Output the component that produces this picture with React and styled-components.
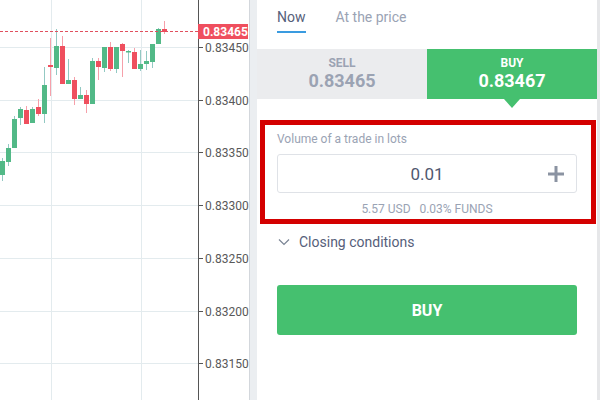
import React from 'react'
import styled, {createGlobalStyle} from 'styled-components'

const GREEN = '#52b987'
const GREEN_WICK = '#93c9c3'
const RED = '#ef4f5e'
const RED_WICK = '#f6a0aa'

// x, bodyTop, bodyBottom, wickTop, wickBottom, up?
const candles = [
    [0, 161, 175, 158, 181, 1],
    [6, 148, 162, 144, 166, 1],
    [12, 119, 148, 116, 148, 1],
    [18, 109, 118, 107, 125, 1],
    [24, 110, 124, 106, 124, 0],
    [30, 109, 123, 107, 123, 1],
    [36, 107, 114, 99, 116, 0],
    [42, 85, 114, 67, 123, 1],
    [48, 65, 67, 38, 96, 0],
    [54, 46, 68, 29, 75, 1],
    [60, 46, 84, 36, 84, 0],
    [66, 80, 84, 59, 84, 1],
    [72, 80, 99, 77, 105, 0],
    [78, 95, 99, 87, 99, 1],
    [84, 95, 104, 90, 113, 0],
    [90, 61, 104, 58, 104, 1],
    [96, 61, 67, 58, 80, 0],
    [102, 47, 68, 47, 72, 1],
    [108, 47, 69, 42, 71, 0],
    [114, 47, 69, 47, 73, 1],
    [120, 44, 51, 43, 77, 0],
    [126, 51, 52, 50, 63, 1],
    [132, 52, 69, 48, 69, 0],
    [138, 64, 69, 50, 71, 1],
    [144, 61, 64, 51, 70, 1],
    [150, 44, 62, 44, 68, 1],
    [156, 29, 44, 28, 44, 1],
    [162, 29, 32, 21, 34, 0],
]

const levels = [
    [47, '0.83450'],
    [100, '0.83400'],
    [152, '0.83350'],
    [205, '0.83300'],
    [258, '0.83250'],
    [311, '0.83200'],
    [363, '0.83150'],
]

function Chart() {
    return (
        <ChartBox>
            <svg width="249" height="400" viewBox="0 0 249 400">
                {levels.map(([y]) => (
                    <line key={y} x1="0" x2="198" y1={y + 0.5} y2={y + 0.5} stroke="#e3ebee" />
                ))}
                <line x1="51.5" x2="51.5" y1="0" y2="400" stroke="#e3ebee" />
                <line x1="141.5" x2="141.5" y1="0" y2="400" stroke="#e3ebee" />
                {candles.map(([x, bt, bb, wt, wb, up], i) => (
                    <g key={i}>
                        <line x1={x + 2.5} x2={x + 2.5} y1={wt} y2={wb} stroke={up ? GREEN_WICK : RED_WICK} />
                        <rect x={x} y={bt} width="5" height={Math.max(bb - bt, 1.5)} fill={up ? GREEN : RED} />
                    </g>
                ))}
                <line x1="0" x2="198" y1="31.5" y2="31.5" stroke="#e0505e" strokeDasharray="3 2" />
                <line x1="198.5" x2="198.5" y1="0" y2="400" stroke="#555" />
                {levels.map(([y, label]) => (
                    <g key={label}>
                        <line x1="198" x2="203" y1={y + 0.5} y2={y + 0.5} stroke="#555" />
                        <AxisText x="205" y={y + 4.5}>{label}</AxisText>
                    </g>
                ))}
                <rect x="198" y="24" width="50" height="15" fill={RED} />
                <PriceText x="203" y="36">0.83465</PriceText>
            </svg>
        </ChartBox>
    )
}

export default function App() {
    return (
        <>
            <Global />
            <Screen>
                <Chart />
                <Divider />
                <Panel>
                    <Tabs>
                        <Tab active>Now</Tab>
                        <Tab>At the price</Tab>
                    </Tabs>
                    <Quotes>
                        <Quote>
                            <QuoteLabel>SELL</QuoteLabel>
                            <QuotePrice>0.83465</QuotePrice>
                        </Quote>
                        <Quote active>
                            <QuoteLabel>BUY</QuoteLabel>
                            <QuotePrice>0.83467</QuotePrice>
                        </Quote>
                    </Quotes>
                    <Highlight>
                        <FieldLabel>Volume of a trade in lots</FieldLabel>
                        <Input>
                            <span>0.01</span>
                            <Plus>
                                <svg width="16" height="16" viewBox="0 0 16 16">
                                    <path d="M8 0v16M0 8h16" stroke="#8b93a2" strokeWidth="3" />
                                </svg>
                            </Plus>
                        </Input>
                        <Funds>5.57 USD&nbsp;&nbsp;&nbsp;0.03% FUNDS</Funds>
                    </Highlight>
                    <Conditions>
                        <svg width="12" height="8" viewBox="0 0 12 8">
                            <path d="M1 1.5l5 5 5-5" stroke="#7a8494" strokeWidth="1.2" fill="none" />
                        </svg>
                        Closing conditions
                    </Conditions>
                    <BuyButton>BUY</BuyButton>
                </Panel>
                <Scroll />
            </Screen>
        </>
    )
}

const Global = createGlobalStyle`
    body {
        margin: 0;
        font-family: Roboto, "Liberation Sans", sans-serif;
        background: #fff;
    }
`
const Screen = styled.div`
    display: flex;
    width: 600px;
    height: 400px;
    overflow: hidden;
`
const ChartBox = styled.div`
    width: 249px;
    flex: none;
    & svg { display: block; }
`
const AxisText = styled.text`
    font-family: Roboto, sans-serif;
    font-size: 12px;
    fill: #595959;
`
const PriceText = styled.text`
    font-family: Roboto, sans-serif;
    font-size: 12px;
    font-weight: bold;
    fill: #fff;
`
const Divider = styled.div`
    width: 7px;
    flex: none;
    background: #ebeef1;
    border-left: 1px solid #d3d7dc;
`
const Panel = styled.div`
    width: 340px;
    flex: none;
    display: flex;
    flex-direction: column;
`
const Tabs = styled.div`
    display: flex;
    gap: 30px;
    padding: 9px 0 0 20px;
    height: 40px;
    box-sizing: border-box;
`
const Tab = styled.div`
    font-size: 14px;
    line-height: 17px;
    height: 22px;
    color: ${p => p.active ? '#56607a' : '#9aa3b4'};
    border-bottom: 2px solid ${p => p.active ? '#3a9be0' : 'transparent'};
`
const Quotes = styled.div`
    display: flex;
    height: 50px;
    margin-top: 9px;
`
const Quote = styled.div`
    position: relative;
    flex: 1;
    display: flex;
    flex-direction: column;
    align-items: center;
    padding-top: 7px;
    box-sizing: border-box;
    background: ${p => p.active ? '#45c06f' : '#ebecee'};
    color: ${p => p.active ? '#fff' : '#9ba3b3'};
    ${p => p.active && `
        &::after {
            content: '';
            position: absolute;
            left: 50%;
            bottom: -9px;
            margin-left: -8px;
            border-left: 8px solid transparent;
            border-right: 8px solid transparent;
            border-top: 9px solid #45c06f;
        }
    `}
`
const QuoteLabel = styled.div`
    font-size: 12px;
    font-weight: bold;
    line-height: 14px;
`
const QuotePrice = styled.div`
    font-size: 18px;
    font-weight: bold;
    line-height: 22px;
`
const Highlight = styled.div`
    margin: 21px 1px 0 3px;
    height: 104px;
    box-sizing: border-box;
    border: 5px solid #d40000;
    padding: 7px 14px 0 12px;
    display: flex;
    flex-direction: column;
`
const FieldLabel = styled.div`
    font-size: 12px;
    line-height: 14px;
    color: #9aa3b4;
`
const Input = styled.div`
    position: relative;
    margin-top: 8px;
    height: 39px;
    box-sizing: border-box;
    border: 1px solid #dfe2e7;
    border-radius: 3px;
    display: flex;
    align-items: center;
    justify-content: center;
    font-size: 17px;
    color: #4f5870;
`
const Plus = styled.div`
    position: absolute;
    right: 12px;
    top: 11px;
    & svg { display: block; }
`
const Funds = styled.div`
    margin-top: 9px;
    text-align: center;
    font-size: 12px;
    line-height: 14px;
    color: #9aa3b4;
`
const Conditions = styled.div`
    display: flex;
    align-items: center;
    gap: 9px;
    padding-left: 21px;
    margin-top: 9px;
    height: 17px;
    font-size: 14px;
    color: #56607a;
`
const BuyButton = styled.button`
    margin: 35px 0 0 20px;
    width: 300px;
    height: 50px;
    border: none;
    border-radius: 3px;
    background: #45c06f;
    color: #fff;
    font-family: Roboto, sans-serif;
    font-size: 16px;
    font-weight: bold;
`
const Scroll = styled.div`
    width: 3px;
    flex: none;
    background: #e6e7e9;
`
